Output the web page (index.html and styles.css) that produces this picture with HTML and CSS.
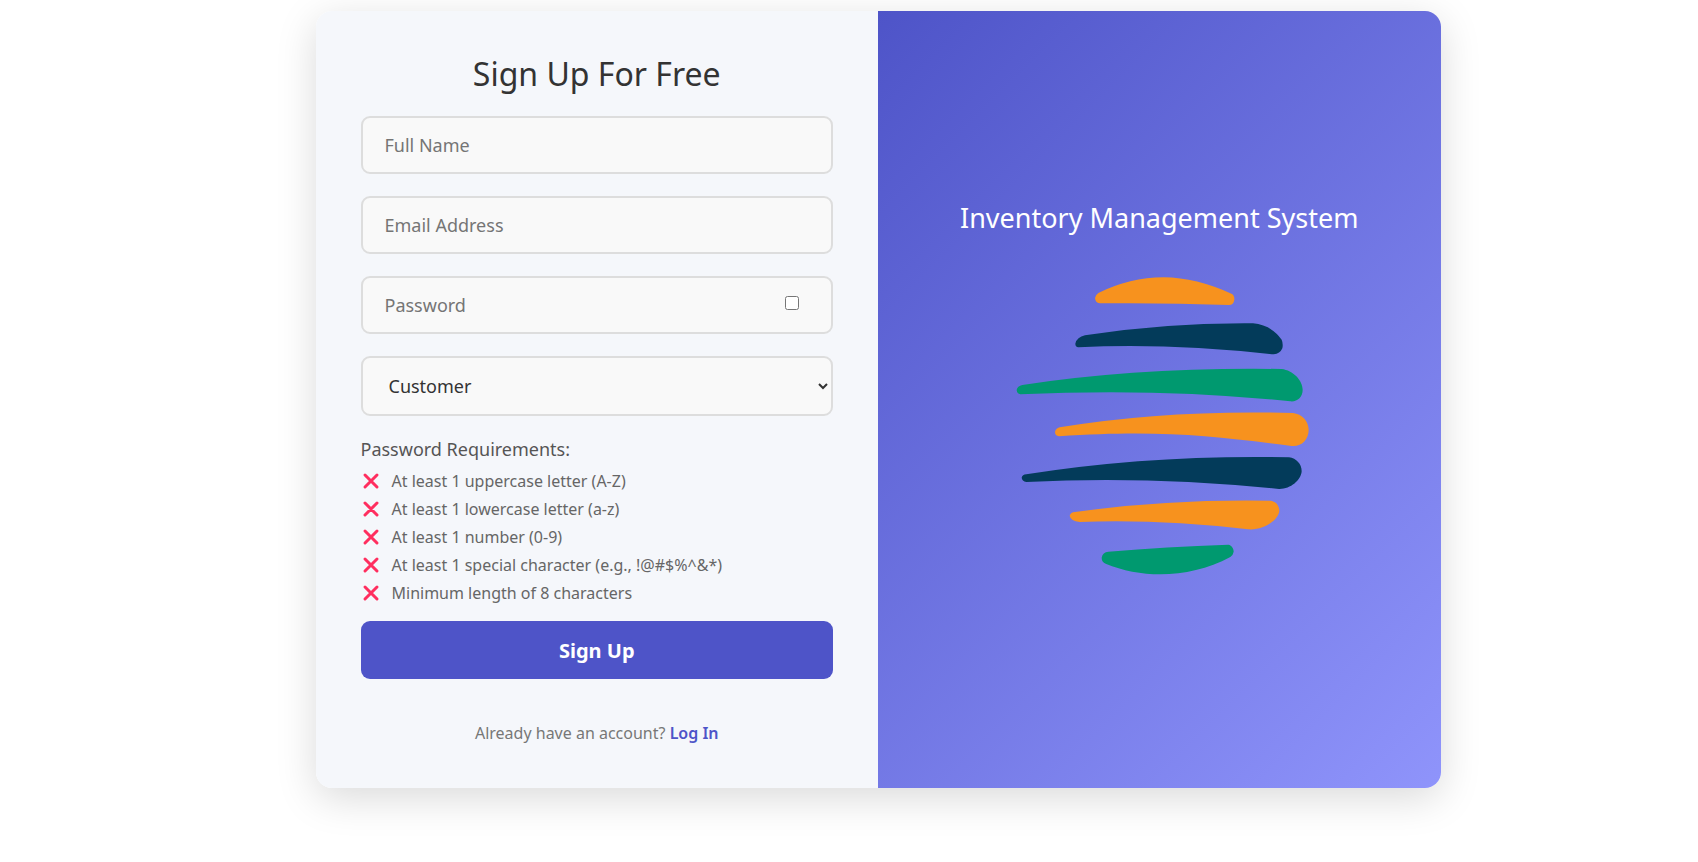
FILE: index.html
```html
<!DOCTYPE html>
<html lang="en">
<head>
<meta charset="utf-8">
<meta name="viewport" content="width=device-width, initial-scale=1">
<title>Sign Up</title>
<link rel="stylesheet" href="styles.css">
</head>
<body>
<svg class="sprite" aria-hidden="true">
  <symbol id="cross" viewBox="0 0 18 18"><path d="M3 3 15 15M15 3 3 15"/></symbol>
</svg>
<main class="page">
  <div class="card">
    <section class="form-side">
      <h1 class="title">Sign Up For Free</h1>
      <form class="form">
        <input class="field" type="text" placeholder="Full Name" aria-label="Full Name">
        <input class="field" type="email" placeholder="Email Address" aria-label="Email Address">
        <div class="password">
          <input class="field" type="password" placeholder="Password" aria-label="Password">
          <input class="toggle" type="checkbox" aria-label="Show password">
        </div>
        <select class="field select" aria-label="Role">
          <option>Customer</option>
        </select>
        <div class="rules">
          <p class="rules-title">Password Requirements:</p>
          <ul class="rules-list">
            <li class="rule"><svg class="cross"><use href="#cross"/></svg><span>At least 1 uppercase letter (A-Z)</span></li>
            <li class="rule"><svg class="cross"><use href="#cross"/></svg><span>At least 1 lowercase letter (a-z)</span></li>
            <li class="rule"><svg class="cross"><use href="#cross"/></svg><span>At least 1 number (0-9)</span></li>
            <li class="rule"><svg class="cross"><use href="#cross"/></svg><span>At least 1 special character (e.g., !@#$%^&amp;*)</span></li>
            <li class="rule"><svg class="cross"><use href="#cross"/></svg><span>Minimum length of 8 characters</span></li>
          </ul>
          <button class="submit" type="submit">Sign Up</button>
        </div>
      </form>
      <p class="login">Already have an account? <a class="login-link" href="#">Log In</a></p>
    </section>
    <section class="brand-side">
      <h2 class="brand">Inventory Management System</h2>
      <svg class="logo" viewBox="28 50 900 894" role="img" aria-label="Company logo">
        <g fill="#f7921e">
          <path d="M286 113Q286 105 296 98Q390 52 492 51Q590 52 697 101Q705 107 704 118Q702 134 688 134Q500 127 300 129Q287 127 286 113Z"/>
          <path d="M166 515Q168 504 180 501Q500 448 880 458C907 461 927 483 927 509C927 538 905 560 876 557C640 527 480 508 178 528Q166 526 166 515Z"/>
          <path d="M210 766Q213 756 226 755Q500 716 810 721C828 722 839 734 839 752C836 780 790 811 745 807Q480 776 240 785Q213 782 210 766Z"/>
        </g>
        <g fill="#033b5a">
          <path d="M227 250Q232 230 256 225Q500 187 760 189Q815 194 846 238Q851 250 848 264Q841 281 822 282Q500 247 236 261Q227 260 227 250Z"/>
          <path d="M66 652Q68 643 80 642Q450 583 868 591C890 594 906 611 906 633C904 660 872 687 838 686Q450 646 80 665Q67 662 66 652Z"/>
        </g>
        <g fill="#00996f">
          <path d="M51 389Q53 377 68 374Q420 320 846 326C880 330 909 360 909 388C909 410 893 425 872 423Q480 382 62 402Q52 400 51 389Z"/>
          <path d="M306 892Q309 875 326 874Q500 859 686 853C697 855 702 865 702 874Q700 885 692 890C570 955 430 956 318 910Q306 905 306 892Z"/>
        </g>
      </svg>
    </section>
  </div>
</main>
</body>
</html>
```

FILE: styles.css
```css
* { box-sizing: border-box; }

body,
h1,
h2,
p,
ul {
  margin: 0;
  padding: 0;
}

body {
  background: #fff;
  color: #333;
  font-family: "Noto Sans", "Open Sans", sans-serif;
}

.sprite {
  position: absolute;
  width: 0;
  height: 0;
}

.page {
  display: flex;
  justify-content: center;
  padding: 11px 0 60px 58px;
}

.card {
  display: grid;
  grid-template-columns: 1fr 1fr;
  width: 100%;
  max-width: 1125px;
  border-radius: 16px;
  overflow: hidden;
  box-shadow: 0 10px 40px rgba(0, 0, 0, 0.15);
}

.form-side {
  padding: 44px 45px 45px;
  background: #f5f7fb;
}

.title {
  margin-bottom: 23px;
  font-size: 32px;
  font-weight: 400;
  line-height: 38px;
  text-align: center;
}

.form {
  display: flex;
  flex-direction: column;
  gap: 22px;
}

.field {
  display: block;
  width: 100%;
  height: 58px;
  padding: 0 22px;
  border: 2px solid #ddd;
  border-radius: 9px;
  background: #f9f9f9;
  color: #333;
  font-family: inherit;
  font-size: 18px;
}

.field::placeholder { color: #757575; }

.select {
  height: 60px;
  padding: 0 8px 0 22px;
}

.password { position: relative; }

.toggle {
  position: absolute;
  top: 20px;
  right: 34px;
  width: 14px;
  height: 14px;
  margin: 0;
}

.rules-title {
  margin-bottom: 7px;
  color: #555;
  font-size: 18px;
  line-height: 22px;
}

.rules-list { list-style: none; }

.rule {
  display: flex;
  align-items: center;
  gap: 12px;
  padding-left: 1px;
  color: #666;
  font-size: 16px;
  line-height: 28px;
}

.cross {
  width: 18px;
  height: 18px;
  fill: none;
  stroke: #ff2e5f;
  stroke-width: 3;
  stroke-linecap: round;
}

.submit {
  display: block;
  width: 100%;
  height: 58px;
  margin-top: 14px;
  border: 0;
  border-radius: 9px;
  background: #4e54c8;
  color: #fff;
  font-family: inherit;
  font-size: 20px;
  font-weight: 700;
}

.login {
  margin-top: 44px;
  color: #777;
  font-size: 16px;
  line-height: 20px;
  text-align: center;
}

.login-link {
  color: #4e54c8;
  font-weight: 600;
  text-decoration: none;
}

.brand-side {
  display: flex;
  flex-direction: column;
  align-items: center;
  justify-content: center;
  padding: 45px 45px 69px;
  background: linear-gradient(135deg, #4e54c8, #8f94fb);
  color: #fff;
}

.brand {
  margin-bottom: 42px;
  font-size: 27px;
  font-weight: 400;
  line-height: 34px;
  text-align: center;
}

.logo {
  width: 100%;
  max-width: 300px;
}
```
